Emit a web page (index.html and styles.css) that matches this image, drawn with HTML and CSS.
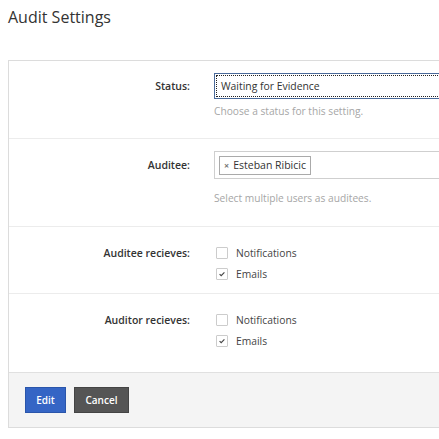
FILE: index.html
```html
<!DOCTYPE html>
<html>
<head>
<meta charset="utf-8">
<link rel="stylesheet" href="styles.css">
</head>
<body>
<h1 class="title">Audit Settings</h1>
<div class="panel">
  <div class="row row-status">
    <div class="label">Status:</div>
    <div class="control">
      <div class="select focused"><span class="select-inner">Waiting for Evidence</span></div>
      <div class="help">Choose a status for this setting.</div>
    </div>
  </div>
  <div class="row row-auditee">
    <div class="label">Auditee:</div>
    <div class="control">
      <div class="multi"><span class="tag"><span class="tag-x">×</span>Esteban Ribicic</span></div>
      <div class="help help-lower">Select multiple users as auditees.</div>
    </div>
  </div>
  <div class="row row-check">
    <div class="label">Auditee recieves:</div>
    <div class="control checks">
      <label class="check"><span class="box"></span>Notifications</label>
      <label class="check"><span class="box checked"><svg viewBox="0 0 10 10" width="8" height="8"><path d="M2 5.2 L4 7.2 L8 3" fill="none" stroke="#444" stroke-width="1.4"/></svg></span>Emails</label>
    </div>
  </div>
  <div class="row row-check last">
    <div class="label">Auditor recieves:</div>
    <div class="control checks">
      <label class="check"><span class="box"></span>Notifications</label>
      <label class="check"><span class="box checked"><svg viewBox="0 0 10 10" width="8" height="8"><path d="M2 5.2 L4 7.2 L8 3" fill="none" stroke="#444" stroke-width="1.4"/></svg></span>Emails</label>
    </div>
  </div>
  <div class="footer">
    <button class="btn btn-primary">Edit</button>
    <button class="btn btn-dark">Cancel</button>
  </div>
</div>
</body>
</html>
```
FILE: styles.css
```css
html, body {
  margin: 0;
  padding: 0;
  overflow: hidden;
  background: #fff;
}
body {
  padding: 0 0 0 8px;
  font-family: "Open Sans", "DejaVu Sans", sans-serif;
  color: #333;
  width: 600px;
}
.title {
  margin: 0;
  height: 60px;
  padding-top: 5px;
  box-sizing: border-box;
  font-size: 16px;
  font-weight: 400;
  line-height: 24px;
  color: #333;
}
.panel {
  border: 1px solid #dcdcdc;
  width: 560px;
}
.row {
  display: grid;
  grid-template-columns: 181px 1fr;
  column-gap: 24px;
  border-bottom: 1px solid #ececec;
}
.row.last { border-bottom: none; }
.row-status { padding: 12px 0 0; height: 65px; }
.row-auditee { padding: 12px 0 0; height: 75px; }
.row-check { padding: 16px 0 0; height: 50px; }
.row-check.last { height: 62px; }
.label {
  text-align: right;
  font-size: 10.5px;
  font-weight: 600;
  color: #333;
  line-height: 26px;
}
.row-auditee .label { line-height: 28px; }
.row-check .label { line-height: 20px; }
.select {
  height: 26px;
  box-sizing: border-box;
  border: 1px solid #4a6a9a;
  border-right: none;
  padding: 1px;
}
.select-inner {
  display: block;
  height: 100%;
  box-sizing: border-box;
  outline: 1px dotted #222;
  outline-offset: -1px;
  font-size: 10.4px;
  line-height: 22px;
  padding-left: 5px;
  color: #333;
}
.help {
  font-size: 10.2px;
  color: #a6a6a6;
  margin-top: 6px;
  line-height: 12px;
}
.help-lower { margin-top: 13px; }
.multi {
  height: 28px;
  box-sizing: border-box;
  border: 1px solid #cfcfcf;
  border-right: none;
  padding: 0 4px;
  display: flex;
  align-items: center;
}
.tag {
  display: inline-flex;
  align-items: center;
  height: 19px;
  box-sizing: border-box;
  border: 1px solid #aaa;
  padding: 0 4px 0 4px;
  font-size: 10.5px;
  line-height: 17px;
  color: #333;
}
.tag-x {
  font-size: 9px;
  color: #777;
  margin-right: 4px;
  font-weight: 700;
}
.checks {
  display: flex;
  flex-direction: column;
  gap: 1px;
}
.check {
  display: flex;
  align-items: center;
  height: 20px;
  font-size: 10.3px;
  color: #444;
  padding-left: 2px;
}
.box {
  width: 12px;
  height: 12px;
  border: 1px solid #ccc;
  border-radius: 1px;
  box-sizing: border-box;
  margin-right: 8px;
  display: flex;
  align-items: center;
  justify-content: center;
  background: #fff;
}
.footer {
  background: #f4f4f4;
  border-top: 1px solid #e0e0e0;
  height: 55px;
  padding: 14px 0 0 16px;
  box-sizing: border-box;
  display: flex;
  gap: 8px;
  align-items: flex-start;
}
.btn {
  height: 26px;
  font-family: "Open Sans", "DejaVu Sans", sans-serif;
  font-size: 10px;
  font-weight: 600;
  color: #fff;
  border-radius: 0;
  cursor: pointer;
  padding: 0;
}
.btn-primary {
  background: #3565c5;
  border: 1px solid #2a55aa;
  width: 41px;
}
.btn-dark {
  background: #555;
  border: 1px solid #444;
  width: 55px;
}
```
